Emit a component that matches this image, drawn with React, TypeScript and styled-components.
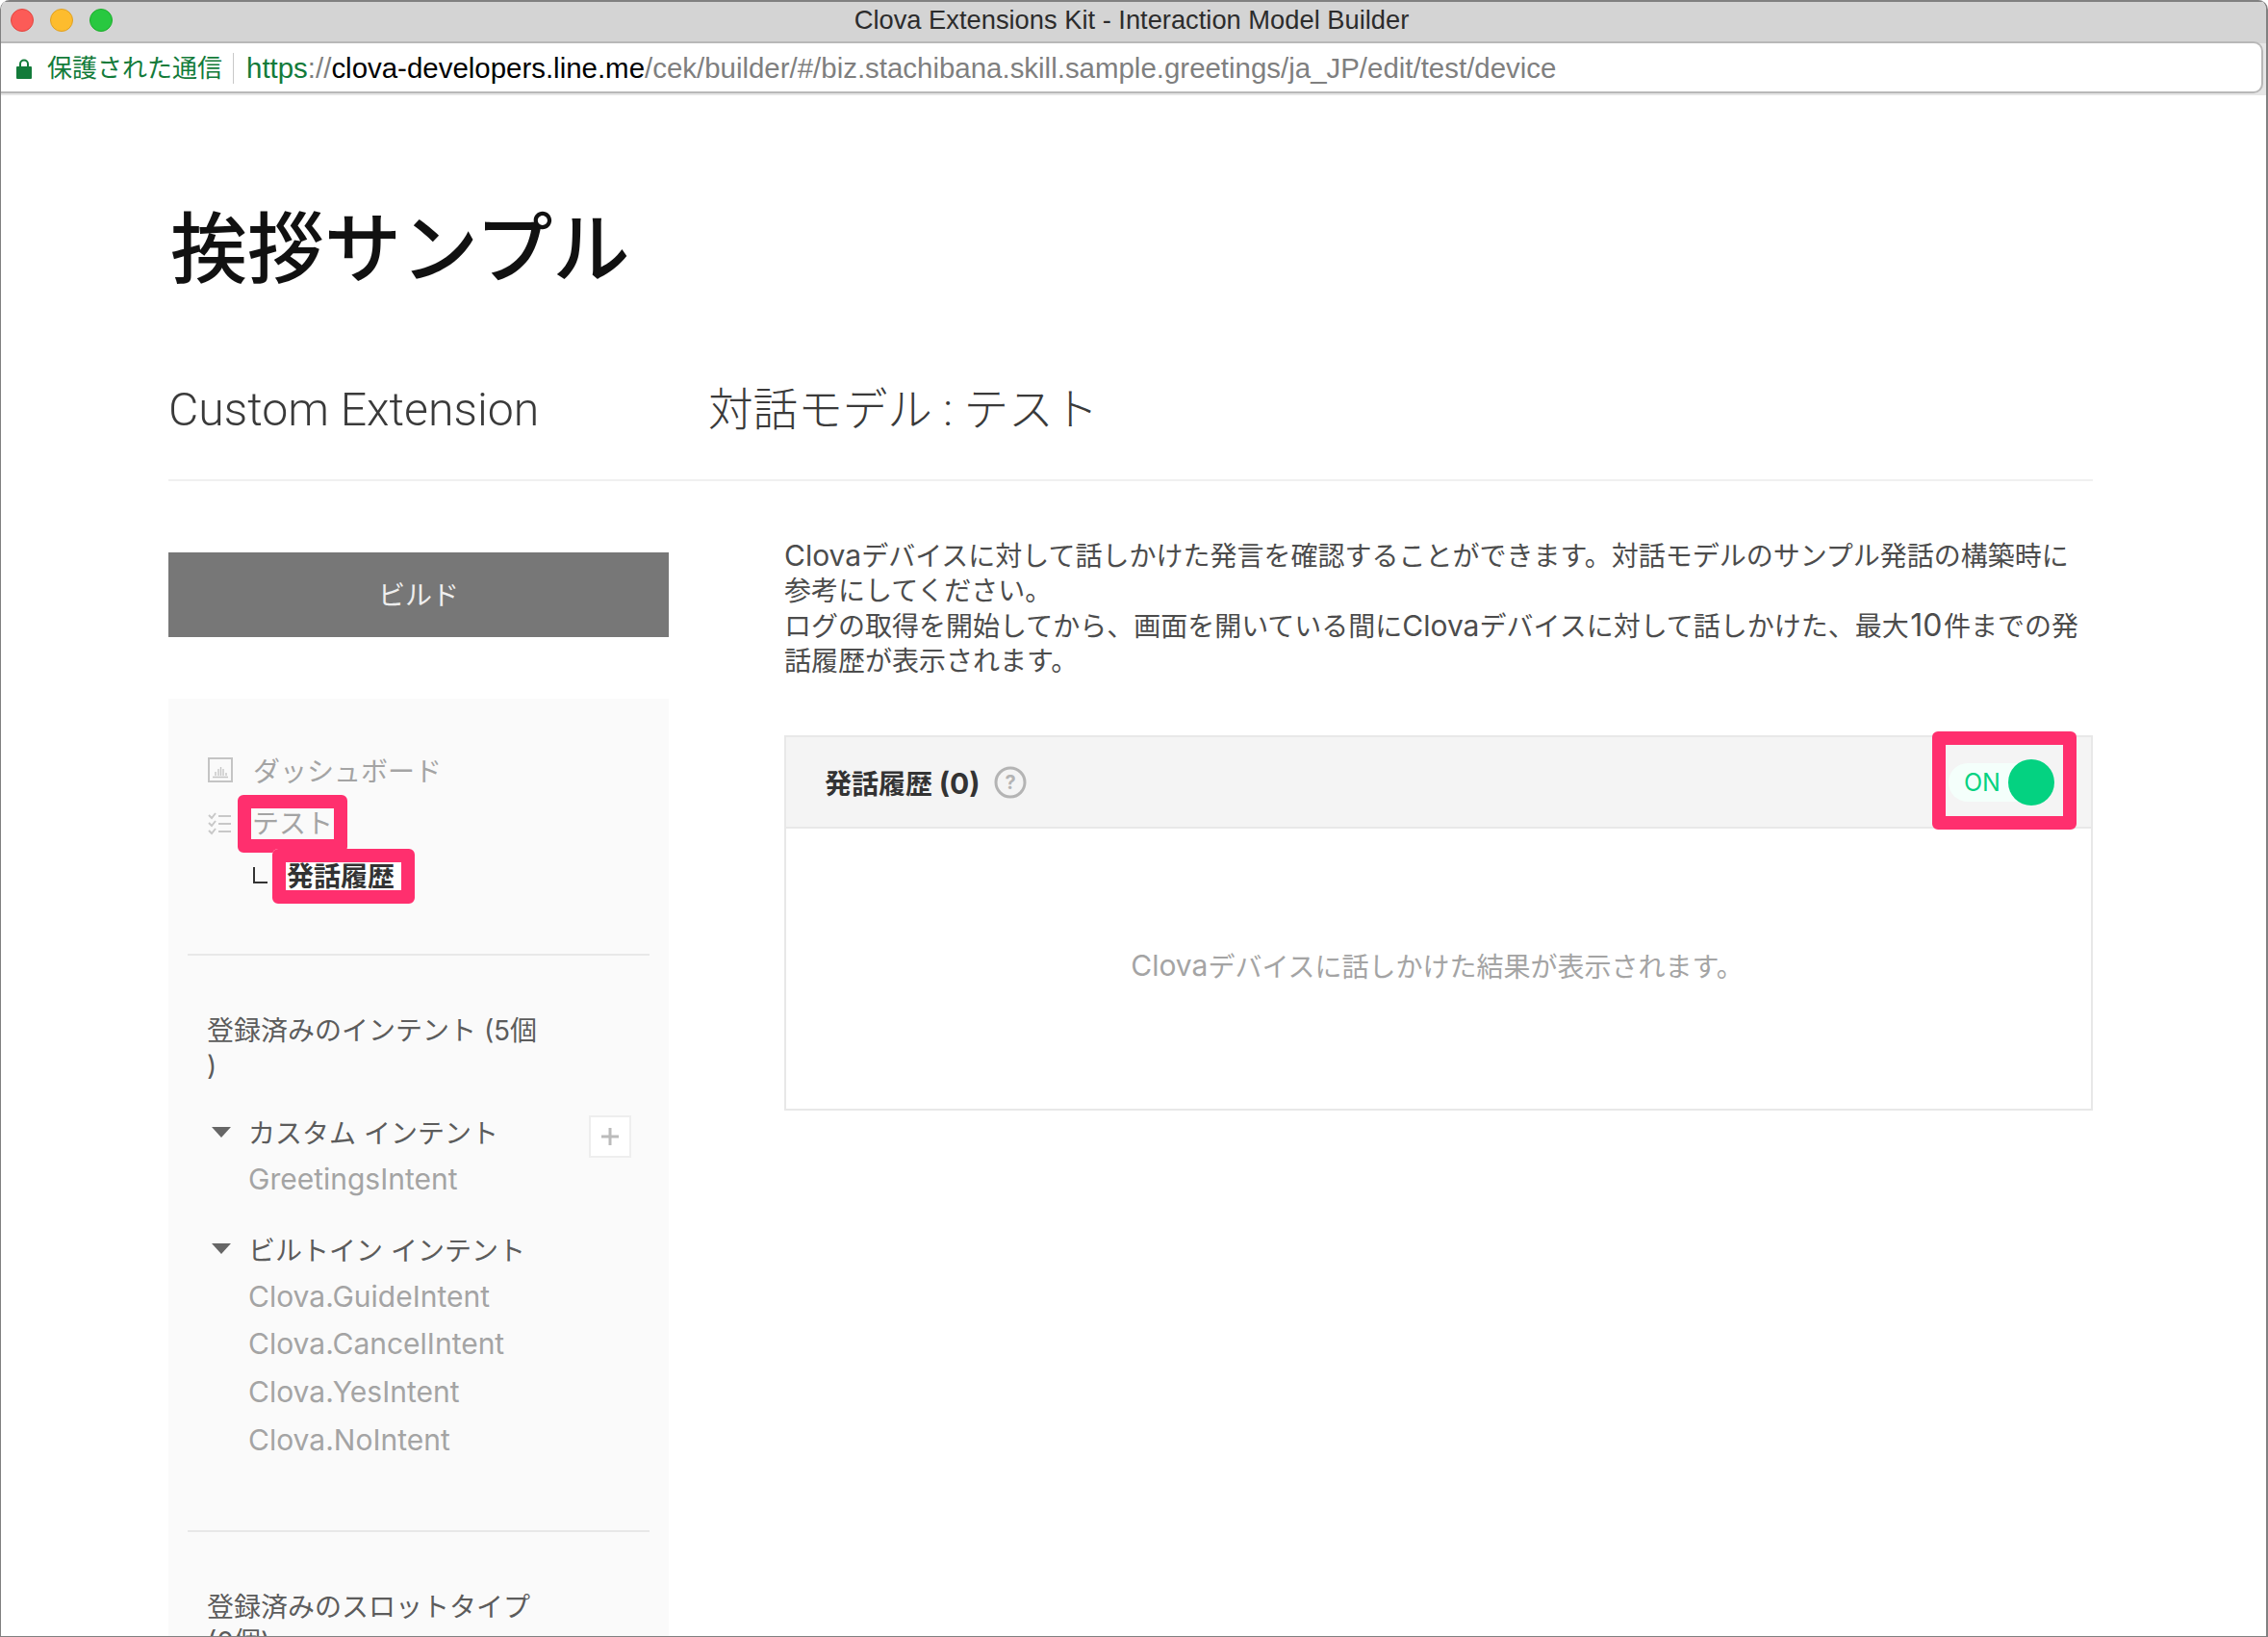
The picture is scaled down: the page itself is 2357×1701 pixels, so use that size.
import React from "react";
import styled, { createGlobalStyle } from "styled-components";

const JP = `"Liberation Sans", "Noto Sans CJK JP", sans-serif`;
const UI = `Inter, "Noto Sans CJK JP", sans-serif`;

const Global = createGlobalStyle`
  html, body { margin: 0; padding: 0; background: #fff; }
  body { font-family: ${UI}; height: 1701px; overflow: hidden; }
  * { box-sizing: border-box; }
`;

const Window = styled.div`
  width: 2357px;
  height: 1701px;
  overflow: hidden;
  display: flex;
  flex-direction: column;
  border: 1px solid #808080;
  border-top: 0;
  border-right-width: 2px;
  border-radius: 10px 10px 0 0;
  background: #fff;
`;
const TitleBar = styled.header`
  height: 43px;
  flex: none;
  display: grid;
  grid-template-columns: 1fr auto 1fr;
  align-items: center;
  background: #d4d4d4;
  border-top: 2px solid #808080;
  padding: 0 14px 3px 10px;
`;
const Lights = styled.div`
  display: flex;
  gap: 17px;
`;
const Light = styled.span<{ $c: string; $b: string }>`
  width: 24px;
  height: 24px;
  border-radius: 50%;
  background: ${(p) => p.$c};
  border: 1px solid ${(p) => p.$b};
`;
const WinTitle = styled.div`
  font: 27.3px ${JP};
  color: #2c2c2c;
`;
const AddressTrack = styled.div`
  flex: none;
  height: 56px;
  padding: 0 3px 2px 0;
  background: linear-gradient(#d4d4d4 2px, #e6e6e6 2px);
`;
const AddressBar = styled.div`
  height: 54px;
  display: flex;
  align-items: center;
  padding: 2px 0 0 16px;
  background: #fff;
  border: 2px solid #b8b8b8;
  border-left: 0;
  border-radius: 0 10px 10px 0;
  font: 26px ${JP};
`;
const Secure = styled.span`
  color: #137b3a;
  margin-left: 16px;
  padding-right: 11px;
  border-right: 1px solid #c8c8c8;
  line-height: 32px;
  white-space: nowrap;
`;
const Url = styled.span`
  margin-left: 13px;
  color: #7f7f7f;
  font-size: 29.45px;
  white-space: nowrap;
`;
const Scheme = styled.span`
  color: #137b3a;
`;
const Host = styled.span`
  color: #000;
`;
const Page = styled.main`
  padding: 0 180px 0 174px;
  flex: 1;
  min-height: 0;
`;
const Heading = styled.h1`
  margin: 99px 0 0;
  font: 500 80px/120px ${UI};
  color: #111;
  padding-left: 2px;
`;
const Tabs = styled.nav`
  margin-top: 72px;
  height: 110px;
  display: flex;
  border-bottom: 2px solid #f0f0f0;
  color: #3a3a3a;
  font: 300 48.2px/72px Roboto, "Noto Sans CJK JP", sans-serif;
`;
const Tab = styled.div`
  width: 562px;
`;
const TabJP = styled.div`
  font-size: 46.6px;
  font-weight: 300;
  margin-left: -1px;
`;
const Columns = styled.div`
  margin-top: 59px;
  display: grid;
  grid-template-columns: 520px 1fr;
  column-gap: 120px;
  align-items: start;
`;
const Side = styled.aside`
  display: flex;
  flex-direction: column;
  padding-top: 15px;
`;
const BuildBtn = styled.button`
  height: 88px;
  border: 0;
  padding: 0 0 3px;
  background: #777;
  color: #eee;
  font: 28px ${UI};
`;
const Panel = styled.div`
  margin-top: 64px;
  background: #fafafa;
  padding: 46px 20px 0;
  min-height: 1200px;
`;
const NavRow = styled.div`
  display: flex;
  align-items: center;
  height: 56px;
  padding-left: 21px;
  gap: 21px;
  color: #a4a4a4;
  font-size: 28px;
`;
const SubRow = styled.div`
  display: flex;
  align-items: center;
  height: 54px;
  padding-left: 68px;
  color: #333;
  font-size: 28px;
  font-weight: 700;
  gap: 20px;
`;
const Elbow = styled.span`
  width: 15px;
  height: 17px;
  margin-top: -4px;
  border-left: 2px solid #333;
  border-bottom: 2px solid #333;
`;
const Marked = styled.span<{ $t: number; $r: number; $b: number; $l: number; $fill?: string }>`
  position: relative;
  display: inline-block;
  isolation: isolate;
  line-height: 32px;
  &::before,
  &::after {
    content: "";
    position: absolute;
    inset: -${(p) => p.$t}px -${(p) => p.$r}px -${(p) => p.$b}px -${(p) => p.$l}px;
    border-radius: 6px;
  }
  &::before {
    z-index: -1;
    background: ${(p) => p.$fill ?? "transparent"};
  }
  &::after {
    border: 14px solid #ff2f6e;
  }
`;
const Rule = styled.hr`
  margin: 0;
  border: 0;
  border-top: 2px solid #e8e8e8;
`;
const Group = styled.div<{ $top: number }>`
  margin-top: ${(p) => p.$top}px;
`;
const GroupTitle = styled.div`
  padding-left: 20px;
  color: #5c5c5c;
  font-size: 28px;
  line-height: 36px;
`;
const Tree = styled.div`
  position: relative;
  padding: 0 0 0 25px;
`;
const TreeHead = styled.div`
  display: flex;
  align-items: center;
  height: 50px;
  gap: 18px;
  color: #5c5c5c;
  font-size: 28px;
`;
const Caret = styled.span`
  width: 0;
  height: 0;
  border-left: 10px solid transparent;
  border-right: 10px solid transparent;
  border-top: 11px solid #666;
`;
const Leaf = styled.div`
  padding-left: 38px;
  height: 49.7px;
  line-height: 49.7px;
  color: #a4a4a4;
  font-size: 30px;
  white-space: nowrap;
`;
const AddBtn = styled.span`
  position: absolute;
  right: 19px;
  top: 8px;
  width: 44px;
  height: 44px;
  background: #fff;
  border: 2px solid #eee;
  display: flex;
  align-items: center;
  justify-content: center;
`;
const Lead = styled.p`
  margin: 0;
  color: #4c4c4c;
  font-size: 28px;
  line-height: 36px;
  width: 1355px;
`;
const Lat = styled.span`
  font-size: 30px;
`;
const Num = styled(Lat)`
  font-size: 32px;
  padding: 0 1.5px;
`;
const Card = styled.div`
  margin-top: 59px;
  height: 390px;
  border: 2px solid #e8e8e8;
  display: flex;
  flex-direction: column;
`;
const CardHead = styled.div`
  height: 95px;
  flex: none;
  display: flex;
  align-items: center;
  justify-content: space-between;
  padding: 0 38px 0 40px;
  background: #f4f4f4;
  border-bottom: 2px solid #e8e8e8;
`;
const CardTitle = styled.div`
  display: flex;
  align-items: center;
  gap: 14px;
  color: #333;
  font-size: 28px;
  font-weight: 700;
`;
const Toggle = styled.div`
  position: relative;
  width: 110px;
  height: 40px;
  background: #f4fffb;
  border-radius: 20px;
  color: #04d281;
  font-size: 25px;
  line-height: 40px;
  padding-left: 16px;
`;
const Knob = styled.span`
  position: absolute;
  right: 0;
  top: -4px;
  width: 48px;
  height: 48px;
  border-radius: 50%;
  background: #04d281;
`;
const Empty = styled.div`
  flex: 1;
  display: flex;
  align-items: center;
  justify-content: center;
  color: #a4a4a4;
  font-size: 28px;
  padding: 0 3px 8px 0;
`;

function Lock() {
  return (
    <svg width="16" height="21" viewBox="0 0 16 21">
      <path d="M4 9V5.500a4 4 0 0 1 8 0V9" fill="none" stroke="#137b3a" strokeWidth="2" />
      <rect x="0" y="8" width="16" height="13" rx="1" fill="#137b3a" />
    </svg>
  );
}
function Chart() {
  return (
    <svg width="26" height="26" viewBox="0 0 26 26" fill="none" stroke="#c4c4c4">
      <rect x="1" y="1" width="24" height="24" strokeWidth="2" />
      <path d="M5 20.500h16M8 19v-4M11 19v-7M13.500 19v-9M16 19v-7M19 19v-3" strokeWidth="1.300" />
    </svg>
  );
}
function Checks() {
  return (
    <svg width="25" height="24" viewBox="0 0 25 24" fill="none" stroke="#c8c8c8" strokeWidth="2">
      <path d="M1 3l3 3 4-5M1 11l3 3 4-5M1 19l3 3 4-5M11 4h13M11 12h13M11 20h13" />
    </svg>
  );
}
function Help() {
  return (
    <svg width="34" height="34" viewBox="0 0 34 34">
      <circle cx="17" cy="17" r="15" fill="none" stroke="#b4b4b4" strokeWidth="3" />
      <text x="17" y="24" textAnchor="middle" fontSize="20" fontWeight="700" fill="#b4b4b4" fontFamily="Inter, sans-serif">?</text>
    </svg>
  );
}
function Plus() {
  return (
    <svg width="20" height="20" viewBox="0 0 20 20" stroke="#bbb" strokeWidth="3">
      <path d="M10 1v18M1 10h18" />
    </svg>
  );
}

export default function App() {
  return (
    <>
      <Global />
      <Window>
        <TitleBar>
          <Lights>
            <Light $c="#fc5b57" $b="#e2463f" />
            <Light $c="#fdbc2e" $b="#dfa023" />
            <Light $c="#28c840" $b="#1dad2b" />
          </Lights>
          <WinTitle>Clova Extensions Kit - Interaction Model Builder</WinTitle>
        </TitleBar>
        <AddressTrack>
          <AddressBar>
            <Lock />
            <Secure>保護された通信</Secure>
            <Url>
              <Scheme>https</Scheme>://<Host>clova-developers.line.me</Host>/cek/builder/#/biz.stachibana.skill.sample.greetings/ja_JP/edit/test/device
            </Url>
          </AddressBar>
        </AddressTrack>
        <Page>
          <Heading>挨拶サンプル</Heading>
          <Tabs>
            <Tab>Custom Extension</Tab>
            <TabJP>対話モデル : テスト</TabJP>
          </Tabs>
          <Columns>
            <Side>
              <BuildBtn>ビルド</BuildBtn>
              <Panel>
                <NavRow>
                  <Chart />
                  <span>ダッシュボード</span>
                </NavRow>
                <NavRow>
                  <Checks />
                  <Marked $t={14} $r={15} $b={14} $l={15}>テスト</Marked>
                </NavRow>
                <SubRow>
                  <Elbow />
                  <Marked $t={13} $r={21} $b={12} $l={15} $fill="#fff">発話履歴</Marked>
                </SubRow>
                <Group $top={53}><Rule /></Group>
                <Group $top={60}>
                  <GroupTitle>登録済みのインテント (5個<br />)</GroupTitle>
                </Group>
                <Group $top={26}>
                  <Tree>
                    <TreeHead><Caret />カスタム インテント</TreeHead>
                    <AddBtn><Plus /></AddBtn>
                    <Leaf>GreetingsIntent</Leaf>
                  </Tree>
                </Group>
                <Group $top={22}>
                  <Tree>
                    <TreeHead><Caret />ビルトイン インテント</TreeHead>
                    <Leaf>Clova.GuideIntent</Leaf>
                    <Leaf>Clova.CancelIntent</Leaf>
                    <Leaf>Clova.YesIntent</Leaf>
                    <Leaf>Clova.NoIntent</Leaf>
                  </Tree>
                </Group>
                <Group $top={69}><Rule /></Group>
                <Group $top={60}>
                  <GroupTitle>登録済みのスロットタイプ<br />(0個)</GroupTitle>
                </Group>
              </Panel>
            </Side>
            <section>
              <Lead>
                <Lat>Clova</Lat>デバイスに対して話しかけた発言を確認することができます。対話モデルのサンプル発話の構築時に参考にしてください。<br />
                ログの取得を開始してから、画面を開いている間に<Lat>Clova</Lat>デバイスに対して話しかけた、最大<Num>10</Num>件までの発話履歴が表示されます。
              </Lead>
              <Card>
                <CardHead>
                  <CardTitle>
                    <span>発話履歴 <Lat>(0)</Lat></span>
                    <Help />
                  </CardTitle>
                  <Marked $t={33} $r={23} $b={29} $l={17}>
                    <Toggle>ON<Knob /></Toggle>
                  </Marked>
                </CardHead>
                <Empty><Lat>Clova</Lat>デバイスに話しかけた結果が表示されます。</Empty>
              </Card>
            </section>
          </Columns>
        </Page>
      </Window>
    </>
  );
}
